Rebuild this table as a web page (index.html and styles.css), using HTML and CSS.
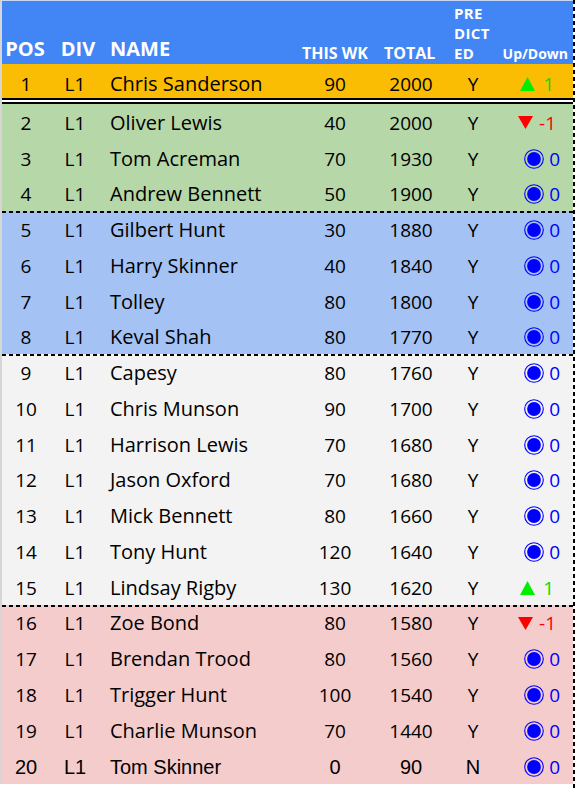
FILE: index.html
```html
<!DOCTYPE html>
<html>
<head>
<meta charset="utf-8">
<link rel="stylesheet" href="styles.css">
</head>
<body>
<div class="page">
  <div class="table">
    <div class="row head">
      <div class="c pos"><span class="hb">POS</span></div>
      <div class="c div"><span class="hb">DIV</span></div>
      <div class="c name"><span class="hb">NAME</span></div>
      <div class="c wk"><span class="hs">THIS WK</span></div>
      <div class="c tot"><span class="hs">TOTAL</span></div>
      <div class="c pred"><div class="hp"><span>PRE</span><span>DICT</span><span>ED</span></div></div>
      <div class="c ud"><span class="hu">Up/Down</span></div>
    </div>

    <div class="row r orange first">
      <div class="c pos">1</div><div class="c div">L1</div><div class="c name">Chris Sanderson</div>
      <div class="c wk">90</div><div class="c tot">2000</div><div class="c pred">Y</div>
      <div class="c ud up"><svg class="tri" viewBox="0 0 15 14"><polygon points="7.5,0 15,14 0,14"/></svg><span>1</span></div>
    </div>

    <div class="row r green">
      <div class="c pos">2</div><div class="c div">L1</div><div class="c name">Oliver Lewis</div>
      <div class="c wk">40</div><div class="c tot">2000</div><div class="c pred">Y</div>
      <div class="c ud down"><svg class="tri" viewBox="0 0 15 13"><polygon points="0,0 15,0 7.5,13"/></svg><span>-1</span></div>
    </div>
    <div class="row r green">
      <div class="c pos">3</div><div class="c div">L1</div><div class="c name">Tom Acreman</div>
      <div class="c wk">70</div><div class="c tot">1930</div><div class="c pred">Y</div>
      <div class="c ud same"><svg class="dot" viewBox="0 0 20 20"><circle cx="10" cy="10" r="9.3" class="ring"/><circle cx="10" cy="10" r="6.9" class="fill"/></svg><span>0</span></div>
    </div>
    <div class="row r green">
      <div class="c pos">4</div><div class="c div">L1</div><div class="c name">Andrew Bennett</div>
      <div class="c wk">50</div><div class="c tot">1900</div><div class="c pred">Y</div>
      <div class="c ud same"><svg class="dot" viewBox="0 0 20 20"><circle cx="10" cy="10" r="9.3" class="ring"/><circle cx="10" cy="10" r="6.9" class="fill"/></svg><span>0</span></div>
    </div>

    <div class="row r blue sep">
      <div class="c pos">5</div><div class="c div">L1</div><div class="c name">Gilbert Hunt</div>
      <div class="c wk">30</div><div class="c tot">1880</div><div class="c pred">Y</div>
      <div class="c ud same"><svg class="dot" viewBox="0 0 20 20"><circle cx="10" cy="10" r="9.3" class="ring"/><circle cx="10" cy="10" r="6.9" class="fill"/></svg><span>0</span></div>
    </div>
    <div class="row r blue">
      <div class="c pos">6</div><div class="c div">L1</div><div class="c name">Harry Skinner</div>
      <div class="c wk">40</div><div class="c tot">1840</div><div class="c pred">Y</div>
      <div class="c ud same"><svg class="dot" viewBox="0 0 20 20"><circle cx="10" cy="10" r="9.3" class="ring"/><circle cx="10" cy="10" r="6.9" class="fill"/></svg><span>0</span></div>
    </div>
    <div class="row r blue">
      <div class="c pos">7</div><div class="c div">L1</div><div class="c name">Tolley</div>
      <div class="c wk">80</div><div class="c tot">1800</div><div class="c pred">Y</div>
      <div class="c ud same"><svg class="dot" viewBox="0 0 20 20"><circle cx="10" cy="10" r="9.3" class="ring"/><circle cx="10" cy="10" r="6.9" class="fill"/></svg><span>0</span></div>
    </div>
    <div class="row r blue">
      <div class="c pos">8</div><div class="c div">L1</div><div class="c name">Keval Shah</div>
      <div class="c wk">80</div><div class="c tot">1770</div><div class="c pred">Y</div>
      <div class="c ud same"><svg class="dot" viewBox="0 0 20 20"><circle cx="10" cy="10" r="9.3" class="ring"/><circle cx="10" cy="10" r="6.9" class="fill"/></svg><span>0</span></div>
    </div>

    <div class="row r grey sep">
      <div class="c pos">9</div><div class="c div">L1</div><div class="c name">Capesy</div>
      <div class="c wk">80</div><div class="c tot">1760</div><div class="c pred">Y</div>
      <div class="c ud same"><svg class="dot" viewBox="0 0 20 20"><circle cx="10" cy="10" r="9.3" class="ring"/><circle cx="10" cy="10" r="6.9" class="fill"/></svg><span>0</span></div>
    </div>
    <div class="row r grey">
      <div class="c pos">10</div><div class="c div">L1</div><div class="c name">Chris Munson</div>
      <div class="c wk">90</div><div class="c tot">1700</div><div class="c pred">Y</div>
      <div class="c ud same"><svg class="dot" viewBox="0 0 20 20"><circle cx="10" cy="10" r="9.3" class="ring"/><circle cx="10" cy="10" r="6.9" class="fill"/></svg><span>0</span></div>
    </div>
    <div class="row r grey">
      <div class="c pos">11</div><div class="c div">L1</div><div class="c name">Harrison Lewis</div>
      <div class="c wk">70</div><div class="c tot">1680</div><div class="c pred">Y</div>
      <div class="c ud same"><svg class="dot" viewBox="0 0 20 20"><circle cx="10" cy="10" r="9.3" class="ring"/><circle cx="10" cy="10" r="6.9" class="fill"/></svg><span>0</span></div>
    </div>
    <div class="row r grey">
      <div class="c pos">12</div><div class="c div">L1</div><div class="c name">Jason Oxford</div>
      <div class="c wk">70</div><div class="c tot">1680</div><div class="c pred">Y</div>
      <div class="c ud same"><svg class="dot" viewBox="0 0 20 20"><circle cx="10" cy="10" r="9.3" class="ring"/><circle cx="10" cy="10" r="6.9" class="fill"/></svg><span>0</span></div>
    </div>
    <div class="row r grey">
      <div class="c pos">13</div><div class="c div">L1</div><div class="c name">Mick Bennett</div>
      <div class="c wk">80</div><div class="c tot">1660</div><div class="c pred">Y</div>
      <div class="c ud same"><svg class="dot" viewBox="0 0 20 20"><circle cx="10" cy="10" r="9.3" class="ring"/><circle cx="10" cy="10" r="6.9" class="fill"/></svg><span>0</span></div>
    </div>
    <div class="row r grey">
      <div class="c pos">14</div><div class="c div">L1</div><div class="c name">Tony Hunt</div>
      <div class="c wk">120</div><div class="c tot">1640</div><div class="c pred">Y</div>
      <div class="c ud same"><svg class="dot" viewBox="0 0 20 20"><circle cx="10" cy="10" r="9.3" class="ring"/><circle cx="10" cy="10" r="6.9" class="fill"/></svg><span>0</span></div>
    </div>
    <div class="row r grey">
      <div class="c pos">15</div><div class="c div">L1</div><div class="c name">Lindsay Rigby</div>
      <div class="c wk">130</div><div class="c tot">1620</div><div class="c pred">Y</div>
      <div class="c ud up"><svg class="tri" viewBox="0 0 15 14"><polygon points="7.5,0 15,14 0,14"/></svg><span>1</span></div>
    </div>

    <div class="row r pink sep">
      <div class="c pos">16</div><div class="c div">L1</div><div class="c name">Zoe Bond</div>
      <div class="c wk">80</div><div class="c tot">1580</div><div class="c pred">Y</div>
      <div class="c ud down"><svg class="tri" viewBox="0 0 15 13"><polygon points="0,0 15,0 7.5,13"/></svg><span>-1</span></div>
    </div>
    <div class="row r pink">
      <div class="c pos">17</div><div class="c div">L1</div><div class="c name">Brendan Trood</div>
      <div class="c wk">80</div><div class="c tot">1560</div><div class="c pred">Y</div>
      <div class="c ud same"><svg class="dot" viewBox="0 0 20 20"><circle cx="10" cy="10" r="9.3" class="ring"/><circle cx="10" cy="10" r="6.9" class="fill"/></svg><span>0</span></div>
    </div>
    <div class="row r pink">
      <div class="c pos">18</div><div class="c div">L1</div><div class="c name">Trigger Hunt</div>
      <div class="c wk">100</div><div class="c tot">1540</div><div class="c pred">Y</div>
      <div class="c ud same"><svg class="dot" viewBox="0 0 20 20"><circle cx="10" cy="10" r="9.3" class="ring"/><circle cx="10" cy="10" r="6.9" class="fill"/></svg><span>0</span></div>
    </div>
    <div class="row r pink">
      <div class="c pos">19</div><div class="c div">L1</div><div class="c name">Charlie Munson</div>
      <div class="c wk">70</div><div class="c tot">1440</div><div class="c pred">Y</div>
      <div class="c ud same"><svg class="dot" viewBox="0 0 20 20"><circle cx="10" cy="10" r="9.3" class="ring"/><circle cx="10" cy="10" r="6.9" class="fill"/></svg><span>0</span></div>
    </div>
    <div class="row r pink last">
      <div class="c pos">20</div><div class="c div">L1</div><div class="c name">Tom Skinner</div>
      <div class="c wk">0</div><div class="c tot">90</div><div class="c pred">N</div>
      <div class="c ud same"><svg class="dot" viewBox="0 0 20 20"><circle cx="10" cy="10" r="9.3" class="ring"/><circle cx="10" cy="10" r="6.9" class="fill"/></svg><span>0</span></div>
    </div>
  </div>
</div>
</body>
</html>
```

FILE: styles.css
```css
* { box-sizing: border-box; }
html, body { margin: 0; padding: 0; background: #fff; }
body {
  font-family: "Open Sans", "Noto Sans", sans-serif;
  color: #000;
}
.page {
  width: 575px;
  min-height: 790px;
  background-image: repeating-linear-gradient(180deg, #000 0 4px, transparent 4px 7px);
  background-size: 2px 100%;
  background-repeat: no-repeat;
  background-position: 573px 0;
}
.table {
  width: 573px;
  border-left: 2px solid #d6d6d6;
  border-top: 1px solid #c8d8f4;
}
.row {
  display: grid;
  grid-template-columns: 48px 50px 198px 74px 78px 46px 77px;
}
.c {
  display: flex;
  align-items: center;
  justify-content: center;
  white-space: nowrap;
}
.c.name { justify-content: flex-start; padding-left: 10px; }
.c.ud { justify-content: flex-end; }

/* header */
.head {
  height: 63px;
  background: #4285f4;
  color: #fff;
  font-weight: 700;
}
.head .c { align-items: flex-end; }
.head .c.pos, .head .c.div, .head .c.name { padding-bottom: 2px; }
.head .c.pos { padding-right: 2px; }
.head .c.div { padding-left: 6px; }
.head .c.tot { justify-content: flex-start; padding-left: 12px; }
.head .c.pred { justify-content: flex-start; padding-left: 4px; }
.head .c.ud { padding-right: 5px; padding-bottom: 1px; }
.hb { font-size: 20px; line-height: 27px; }
.hs { font-size: 16px; line-height: 21px; }
.hp {
  display: flex;
  flex-direction: column;
  font-size: 15px;
  letter-spacing: 0.4px;
  padding-bottom: 1px;
}
.hp span { display: block; height: 20px; line-height: 20px; }
.hu { font-size: 14px; line-height: 19px; }

/* body rows */
.r {
  font-size: 19px;
  height: 35.75px;
  padding-top: 2px;
}
.r .c { line-height: 26px; }
.r .c.name { font-size: 20px; }
.first {
  height: 40px;
  padding-top: 6px;
  border-bottom: 6px double #000;
  background-clip: padding-box;
}
.orange { background-color: #fbbc04; }
.green { background-color: #b6d7a8; }
.blue { background-color: #a4c2f4; }
.grey { background-color: #f3f3f3; }
.pink { background-color: #f4cccc; }
.sep {
  background-image: repeating-linear-gradient(90deg, #000 0 4px, transparent 4px 7px);
  background-size: 100% 2px;
  background-repeat: no-repeat;
  background-position: 0 0;
}
.last {
  height: 36px;
  font-family: "Liberation Sans", Arial, sans-serif;
  font-size: 20px;
  padding-top: 3px;
}
.last .c.name { font-size: 20px; }

/* up/down indicators */
.ud span { display: block; }
.tri { width: 15px; height: 14px; display: block; }
.up { color: #00dd00; padding-right: 19px; }
.up .tri { margin-right: 8px; }
.up polygon { fill: #00ee00; }
.down { color: #ff0000; padding-right: 17px; }
.down .tri { height: 13px; margin-right: 6px; }
.down polygon { fill: #ff0000; }
.same { color: #0000ff; padding-right: 13px; }
.dot { width: 20px; height: 20px; margin-right: 5px; display: block; }
.dot .ring { fill: none; stroke: #0000ff; stroke-width: 1.1; }
.dot .fill { fill: #0000ff; }
.last .ud span { font-family: "Open Sans", sans-serif; font-size: 19px; }
```
